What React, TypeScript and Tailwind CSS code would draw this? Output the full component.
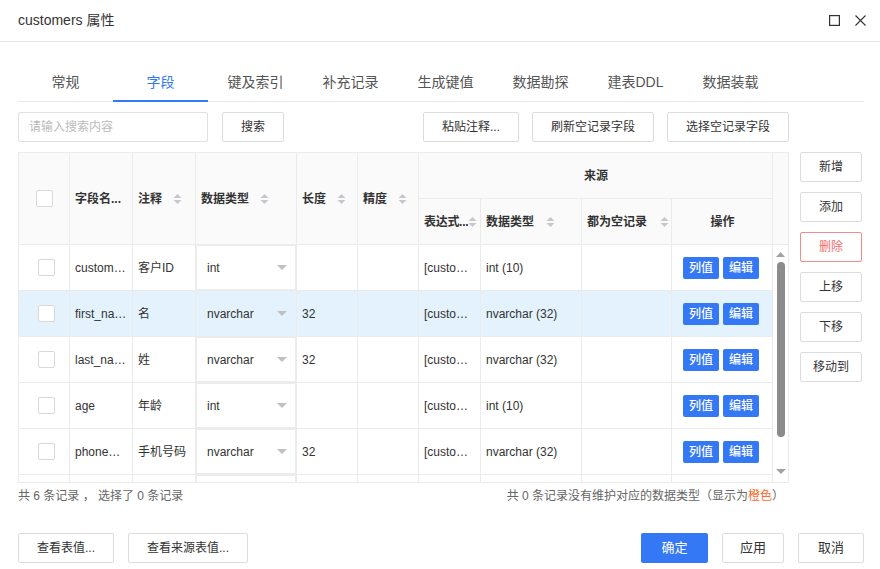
import React from 'react'

const cols = 'grid-cols-[51px_63px_63px_101px_61px_61px_62px_101px_90px_101px]'

const rows = [
  { name: 'custom…', note: '客户ID', type: 'int', len: '', expr: '[custo…', src: 'int (10)' },
  { name: 'first_na…', note: '名', type: 'nvarchar', len: '32', expr: '[custo…', src: 'nvarchar (32)', selected: true },
  { name: 'last_na…', note: '姓', type: 'nvarchar', len: '32', expr: '[custo…', src: 'nvarchar (32)' },
  { name: 'age', note: '年龄', type: 'int', len: '', expr: '[custo…', src: 'int (10)' },
  { name: 'phone…', note: '手机号码', type: 'nvarchar', len: '32', expr: '[custo…', src: 'nvarchar (32)' },
]

const tabs = ['常规', '字段', '键及索引', '补充记录', '生成键值', '数据勘探', '建表DDL', '数据装载']

function SortIcon() {
  return (
    <svg width="9" height="12" viewBox="0 0 9 12" className="shrink-0">
      <path d="M4.5 1 L8.5 5 H0.5 Z" fill="#c4c7cc" />
      <path d="M4.5 11 L8.5 7 H0.5 Z" fill="#c4c7cc" />
    </svg>
  )
}

function Caret({ color = '#c0c0c0' }: { color?: string }) {
  return (
    <svg width="10" height="5" viewBox="0 0 10 5" className="shrink-0">
      <path d="M0 0 H10 L5 5 Z" fill={color} />
    </svg>
  )
}

function Checkbox() {
  return <span className="block w-[17px] h-[17px] border border-[#d9d9d9] rounded-[2px] bg-white" />
}

function Btn({ children, className = '' }: { children: React.ReactNode; className?: string }) {
  return (
    <button className={`h-[30px] border border-[#dcdcdc] rounded-[2px] bg-white text-[12px] leading-[16px] text-[#333] ${className}`}>
      {children}
    </button>
  )
}

export default function App() {
  const th = 'bg-[#fafafa] border-r border-b border-[#ebebeb] flex items-center pl-[5px] pr-[4px] text-[12px] font-semibold text-[#333] whitespace-nowrap overflow-hidden'
  const td = 'border-r border-b border-[#ebebeb] flex items-center pl-[5px] text-[12px] text-[#333] whitespace-nowrap overflow-hidden'

  return (
    <div className="w-[880px] h-[569px] bg-white flex flex-col font-['Liberation_Sans','Noto_Sans_CJK_SC',sans-serif] text-[#333]">

      {/* Title */}
      <div className="h-[42px] shrink-0 border-b border-[#e8e8e8] flex items-center pl-[18px] pr-[14px]">
        <span className="text-[14px] text-[#333]">customers 属性</span>
        <div className="ml-auto flex items-center gap-[15px]">
          <svg width="11" height="11" viewBox="0 0 11 11">
            <rect x="0.6" y="0.6" width="9.8" height="9.8" fill="none" stroke="#333" strokeWidth="1.2" />
          </svg>
          <svg width="11" height="11" viewBox="0 0 11 11">
            <path d="M0.5 0.5 L10.5 10.5 M10.5 0.5 L0.5 10.5" stroke="#333" strokeWidth="1.1" />
          </svg>
        </div>
      </div>

      <div className="px-[18px]">
        {/* Tabs */}
        <div className="mt-[19px] w-[846px] flex border-b border-[#e8e8e8]">
          {tabs.map((t, i) => (
            <div key={t}
              className={`w-[95px] h-[41px] -mb-px pt-[3px] flex items-center justify-center text-[14px] border-b-2 ${
                i === 1 ? 'border-[#3478f6] text-[#3478f6]' : 'border-transparent text-[#555]'
              }`}>
              {t}
            </div>
          ))}
        </div>

        {/* Toolbar */}
        <div className="mt-[10px] w-[771px] flex items-center">
          <div className="w-[190px] h-[30px] border border-[#e0e0e0] rounded-[2px] flex items-center pl-[10px] text-[12px] text-[#bbb]">
            请输入搜索内容
          </div>
          <Btn className="ml-[14px] w-[62px]">搜索</Btn>
          <div className="ml-auto flex gap-[13px]">
            <Btn className="w-[96px]">粘贴注释...</Btn>
            <Btn className="w-[122px]">刷新空记录字段</Btn>
            <Btn className="w-[122px]">选择空记录字段</Btn>
          </div>
        </div>

        {/* Table + side buttons */}
        <div className="mt-[10px] flex items-start">
          <div className="w-[771px] h-[331px] border border-[#ebebeb] overflow-hidden">
            {/* header */}
            <div className="grid grid-cols-[51px_63px_63px_101px_61px_61px_62px_101px_90px_101px_15px] grid-rows-[46px_46px]">
              <div className={`${th} row-span-2 justify-center pl-0 pr-0`}><Checkbox /></div>
              <div className={`${th} row-span-2`}>字段名...</div>
              <div className={`${th} row-span-2`}><span>注释</span><span className="ml-[11px]"><SortIcon /></span></div>
              <div className={`${th} row-span-2`}><span>数据类型</span><span className="ml-[11px]"><SortIcon /></span></div>
              <div className={`${th} row-span-2`}><span>长度</span><span className="ml-[11px]"><SortIcon /></span></div>
              <div className={`${th} row-span-2`}><span>精度</span><span className="ml-[11px]"><SortIcon /></span></div>
              <div className={`${th} col-span-4 justify-center pl-0`}>来源</div>
              <div className="row-span-2 bg-[#fafafa] border-b border-[#ebebeb]" />
              <div className={`${th} pr-0`}><span className="shrink-0 tracking-[-0.3px]">表达式...</span><SortIcon /></div>
              <div className={th}><span>数据类型</span><span className="ml-[12px]"><SortIcon /></span></div>
              <div className={th}><span>都为空记录</span><span className="ml-[13px]"><SortIcon /></span></div>
              <div className={`${th} justify-center pl-0`}>操作</div>
            </div>

            {/* body */}
            <div className="flex h-[237px]">
              <div className="w-[754px]">
                {rows.map((r, i) => (
                  <div key={i} className={`grid ${cols} h-[46px] ${r.selected ? 'bg-[#e3f2fc]' : 'bg-white'}`}>
                    <div className={`${td} justify-center pl-0`}><Checkbox /></div>
                    <div className={td}>{r.name}</div>
                    <div className={td}>{r.note}</div>
                    <div className="border-r border-b border-[#ebebeb]">
                      <div className={`h-full flex items-center justify-between pl-[10px] pr-[8px] border text-[12px] ${
                        r.selected ? 'border-transparent' : 'border-[#ececec] bg-white'
                      }`}>
                        <span>{r.type}</span>
                        <Caret />
                      </div>
                    </div>
                    <div className={td}>{r.len}</div>
                    <div className={td}></div>
                    <div className={td}>{r.expr}</div>
                    <div className={td}>{r.src}</div>
                    <div className={td}></div>
                    <div className={`${td} pl-[11px] gap-[4px]`}>
                      <button className="w-[36px] h-[22px] rounded-[2px] bg-[#3478f6] text-white text-[12px] font-medium">列值</button>
                      <button className="w-[36px] h-[22px] rounded-[2px] bg-[#3478f6] text-white text-[12px] font-medium">编辑</button>
                    </div>
                  </div>
                ))}
                {/* partially visible next row */}
                <div className={`grid ${cols} h-[46px] bg-white`}>
                  <div className="border-r border-[#ebebeb]" />
                  <div className="border-r border-[#ebebeb]" />
                  <div className="border-r border-[#ebebeb]" />
                  <div className="border-r border-[#ebebeb]">
                    <div className="h-full border border-[#ececec] bg-white" />
                  </div>
                  <div className="border-r border-[#ebebeb]" />
                  <div className="border-r border-[#ebebeb]" />
                  <div className="border-r border-[#ebebeb]" />
                  <div className="border-r border-[#ebebeb]" />
                  <div className="border-r border-[#ebebeb]" />
                  <div className="border-r border-[#ebebeb]" />
                </div>
              </div>
              {/* scrollbar */}
              <div className="w-[15px] flex flex-col items-center pt-[7px] pb-[8px] bg-white">
                <svg width="9" height="5" viewBox="0 0 9 5"><path d="M0 5 H9 L4.5 0 Z" fill="#a3a3a3" /></svg>
                <div className="mt-[5px] w-[8px] h-[175px] rounded-full bg-[#8c8c8c]" />
                <div className="flex-1" />
                <Caret color="#a3a3a3" />
              </div>
            </div>
          </div>

          <div className="ml-[11px] w-[62px] flex flex-col gap-[10px]">
            <Btn className="w-full">新增</Btn>
            <Btn className="w-full">添加</Btn>
            <Btn className="w-full !border-[#f28b8b] !text-[#f56c6c]">删除</Btn>
            <Btn className="w-full">上移</Btn>
            <Btn className="w-full">下移</Btn>
            <Btn className="w-full">移动到</Btn>
          </div>
        </div>

        {/* status */}
        <div className="mt-[4px] w-[771px] h-[18px] flex items-center justify-between text-[12px] leading-[18px] text-[#666]">
          <span>共 6 条记录 ， 选择了 0 条记录</span>
          <span className="pr-[5px]">共 0 条记录没有维护对应的数据类型（显示为<span className="text-[#ff6a2b]">橙色</span>）</span>
        </div>
      </div>

      {/* footer buttons */}
      <div className="mt-[28px] pl-[18px] pr-[16px] flex items-center">
        <div className="flex gap-[14px]">
          <Btn className="w-[96px]">查看表值...</Btn>
          <Btn className="w-[120px]">查看来源表值...</Btn>
        </div>
        <div className="ml-auto flex gap-[14px]">
          <button className="w-[67px] h-[30px] rounded-[2px] bg-[#3478f6] text-white text-[13px]">确定</button>
          <Btn className="w-[62px] text-[13px]">应用</Btn>
          <Btn className="w-[66px] text-[13px]">取消</Btn>
        </div>
      </div>
    </div>
  )
}
